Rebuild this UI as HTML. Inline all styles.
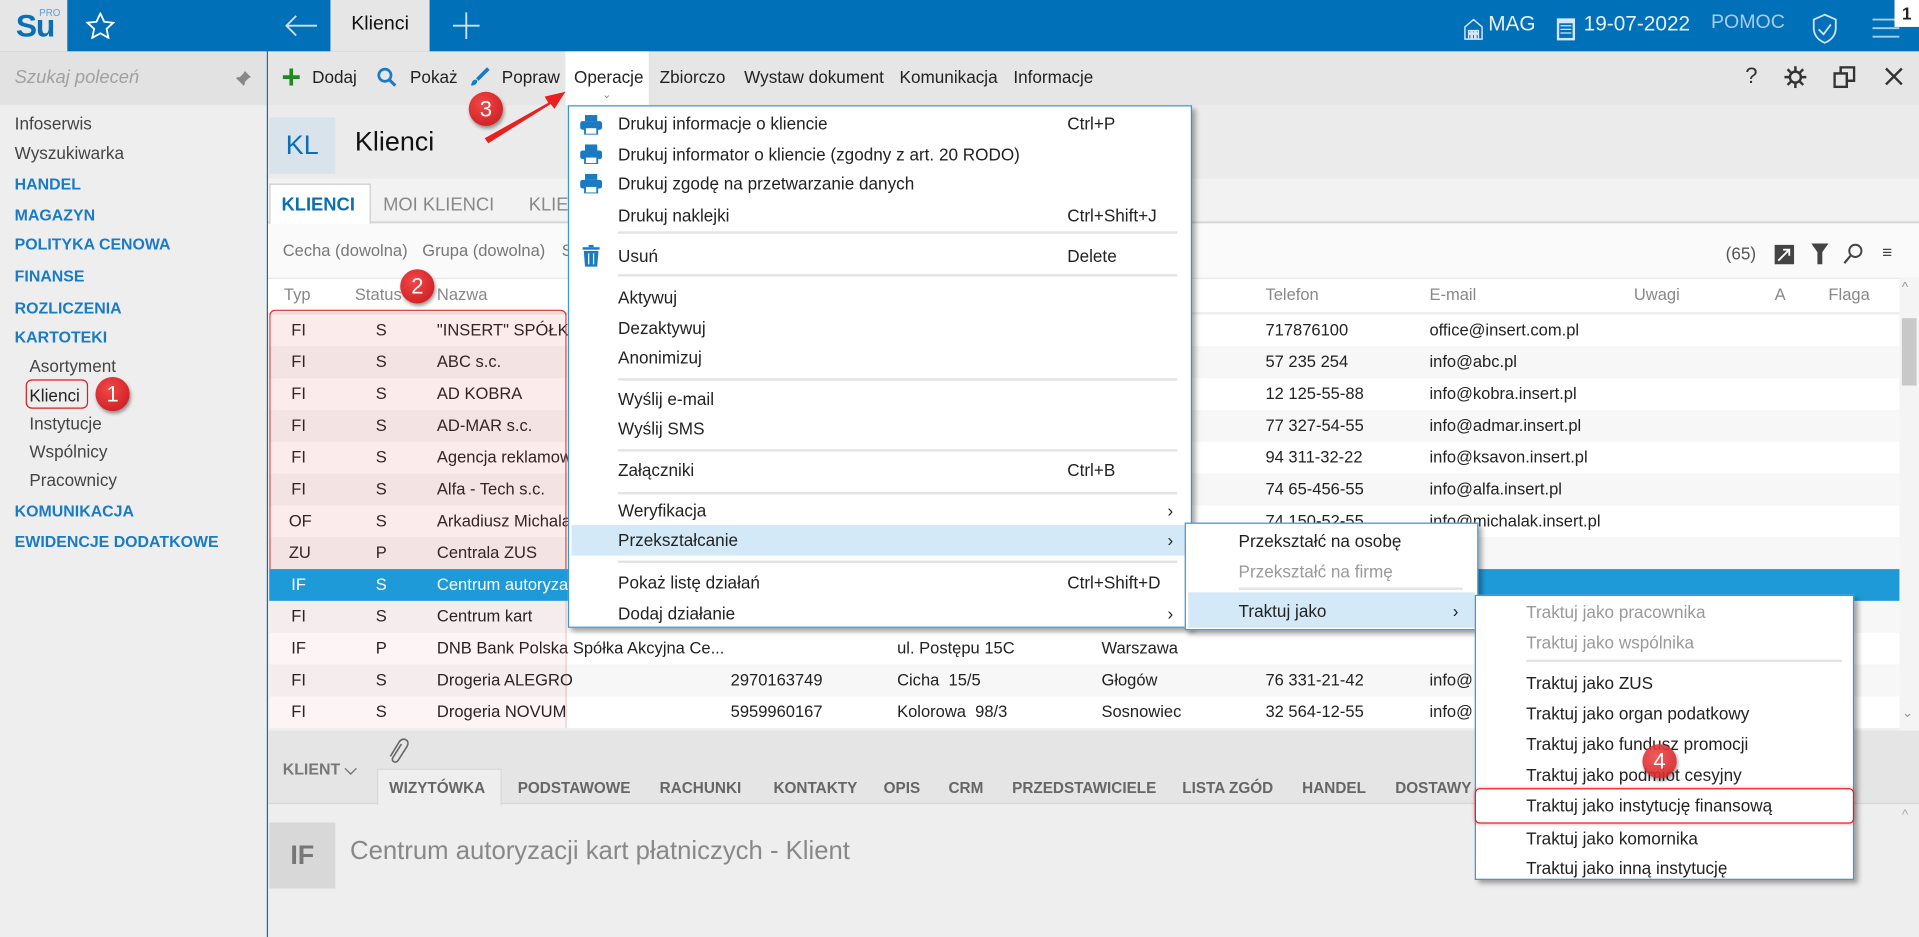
<!DOCTYPE html>
<html><head><meta charset="utf-8">
<style>
*{margin:0;padding:0;box-sizing:border-box}
html,body{width:1919px;height:937px;overflow:hidden;background:#eee}
#w{position:absolute;left:0;top:0;width:1568px;height:766px;transform:scale(1.22385);transform-origin:0 0;font-family:"Liberation Sans",sans-serif;font-size:13.5px;color:#222;background:#eee;overflow:hidden}
.a{position:absolute;white-space:nowrap}
.side .it{position:absolute;left:12px;font-size:14px;color:#444}
.side .b{color:#1a7bc4;font-weight:bold;font-size:13px}
.side .s{left:24px}
.tb span{position:absolute;top:55px;font-size:14px}
.row{position:absolute;left:220px;width:1332px;height:26px}
.row span{position:absolute;top:5px;font-size:13.5px}
.m{position:absolute;background:#fff;border:1px solid #3a96d8;box-shadow:3px 3px 4px rgba(0,0,0,.35)}
.m .t{position:absolute;font-size:14px;white-space:nowrap}
.sep{position:absolute;height:2px;background:#e4e4e4}
.hl{position:absolute;background:#d4e9f7}
.circ{position:absolute;width:28px;height:28px;border-radius:50%;background:radial-gradient(circle at 40% 35%,#f04848,#c8161b);color:#fff;font-size:18px;text-align:center;line-height:28px;box-shadow:1px 2px 3px rgba(0,0,0,.4)}
.bt{position:absolute;top:637px;font-size:12.5px;font-weight:bold;color:#666}
</style></head><body><div id="w">
<!-- top bar -->
<div class="a" style="left:0;top:0;width:1568px;height:42px;background:#0070b8"></div>
<div class="a" style="left:0;top:0;width:55px;height:42px;background:#e6e6e6"></div>
<div class="a" style="left:13px;top:6px;font-size:26px;font-weight:bold;color:#0a6fb5;letter-spacing:-1px">Su</div>
<div class="a" style="left:32px;top:6px;font-size:8px;color:#5aa0d8">PRO</div>
<svg class="a" style="left:70px;top:10px" width="24" height="22" viewBox="0 0 24 22"><path d="M12 1l3.2 6.8 7.3.8-5.4 5 1.5 7.3L12 17.2 5.4 20.9 6.9 13.6 1.5 8.6l7.3-.8z" fill="none" stroke="#fff" stroke-width="1.5"/></svg>
<svg class="a" style="left:232px;top:12px" width="28" height="18"><path d="M27 9H2M10 1L2 9l8 8" fill="none" stroke="#cfe2f3" stroke-width="1.5"/></svg>
<div class="a" style="left:270px;top:0;width:81px;height:42px;background:#e6e6e6"></div>
<div class="a" style="left:287px;top:11px;font-size:16px;color:#111">Klienci</div>
<svg class="a" style="left:370px;top:10px" width="22" height="22"><path d="M11 0v22M0 11h22" stroke="#cfe2f3" stroke-width="1.5"/></svg>
<svg class="a" style="left:1196px;top:15px" width="16" height="18"><path d="M1 17V7l7-6 7 6v10zM4 10h2v2H4zm3 0h2v2H7zm3 0h2v2h-2zM4 13h2v4H4zm3 0h2v4H7zm3 0h2v4h-2z" fill="none" stroke="#d6e6f4" stroke-width="1.2"/></svg>
<div class="a" style="left:1216px;top:10px;font-size:17px;color:#e8f0f8">MAG</div>
<svg class="a" style="left:1272px;top:14px" width="15" height="20"><rect x="0" y="1" width="15" height="18" fill="#d6e6f4"/><rect x="2" y="5" width="11" height="12" fill="#0070b8"/><path d="M3 7h9M3 10h9M3 13h9" stroke="#d6e6f4"/></svg>
<div class="a" style="left:1294px;top:10px;font-size:17px;color:#e8f0f8">19-07-2022</div>
<div class="a" style="left:1398px;top:10px;font-size:16px;color:#a8cdea">POMOC</div>
<svg class="a" style="left:1480px;top:11px" width="22" height="26"><path d="M11 1L2 5v7c0 6 4 10 9 12 5-2 9-6 9-12V5z M6 13l4 4 6-8" fill="none" stroke="#cfe2f3" stroke-width="1.5"/></svg>
<svg class="a" style="left:1530px;top:14px" width="22" height="18"><path d="M0 2h22M0 9h22M0 16h22" stroke="#a8cdea" stroke-width="1.5"/></svg>
<div class="a" style="left:1548px;top:0;width:20px;height:22px;background:#fff;font-weight:bold;font-size:14px;text-align:center;line-height:22px">1</div>
<!-- sidebar -->
<div class="side">
<div class="a" style="left:0;top:42px;width:218px;height:44px;background:#e2e2e2"></div>
<div class="a" style="left:12px;top:55px;font-size:15px;font-style:italic;color:#a0a0a0">Szukaj poleceń</div>
<svg class="a" style="left:192px;top:57px" width="14" height="14"><path d="M8 1l5 5-2 1-3 3 0 2-1 1-3-3-4 4 4-4-3-3 1-1h2l3-3z" fill="#888"/></svg>
<div class="it" style="top:93px">Infoserwis</div>
<div class="it" style="top:117px">Wyszukiwarka</div>
<div class="it b" style="top:143px">HANDEL</div>
<div class="it b" style="top:168px">MAGAZYN</div>
<div class="it b" style="top:192px">POLITYKA CENOWA</div>
<div class="it b" style="top:218px">FINANSE</div>
<div class="it b" style="top:244px">ROZLICZENIA</div>
<div class="it b" style="top:268px">KARTOTEKI</div>
<div class="it s" style="top:291px">Asortyment</div>
<div class="it s" style="top:315px;color:#222">Klienci</div>
<div class="it s" style="top:338px">Instytucje</div>
<div class="it s" style="top:361px">Wspólnicy</div>
<div class="it s" style="top:384px">Pracownicy</div>
<div class="it b" style="top:410px">KOMUNIKACJA</div>
<div class="it b" style="top:435px">EWIDENCJE DODATKOWE</div>
</div>
<div class="a" style="left:21px;top:310px;width:51px;height:24px;border:1.5px solid #d92020;border-radius:5px"></div>
<div class="a" style="left:218px;top:42px;width:1px;height:724px;background:#0a6fb5"></div>
<!-- toolbar -->
<div class="a" style="left:219px;top:42px;width:1349px;height:44px;background:#e6e6e6"></div>
<div class="a" style="left:462px;top:42px;width:68px;height:44px;background:#fff"></div>
<div class="tb">
<svg class="a" style="left:231px;top:56px" width="14" height="14"><path d="M7 0v14M0 7h14" stroke="#1f8b1f" stroke-width="3"/></svg>
<span style="left:255px">Dodaj</span>
<svg class="a" style="left:308px;top:55px" width="16" height="16"><circle cx="6.5" cy="6.5" r="5" fill="none" stroke="#1a7bc4" stroke-width="2.2"/><path d="M10 10l5 5" stroke="#1a7bc4" stroke-width="2.5"/></svg>
<span style="left:335px">Pokaż</span>
<svg class="a" style="left:384px;top:55px" width="16" height="16"><path d="M15 1L6 10" stroke="#1a7bc4" stroke-width="3"/><path d="M5 10c-3 0-4 3-4 5 2 0 5-1 5-4z" fill="#1a7bc4"/></svg>
<span style="left:410px">Popraw</span>
<span style="left:469px">Operacje</span>
<span style="left:539px">Zbiorczo</span>
<span style="left:608px">Wystaw dokument</span>
<span style="left:735px">Komunikacja</span>
<span style="left:828px">Informacje</span>
</div>
<div class="a" style="left:492px;top:72px;font-size:9px;color:#888">⌄</div>
<div class="a" style="left:1426px;top:52px;font-size:18px;color:#333">?</div>
<svg class="a" style="left:1458px;top:54px" width="18" height="18" viewBox="0 0 18 18"><circle cx="9" cy="9" r="4.5" fill="none" stroke="#333" stroke-width="2"/><path d="M9 0v4M9 14v4M0 9h4M14 9h4M2.6 2.6l2.8 2.8M12.6 12.6l2.8 2.8M2.6 15.4l2.8-2.8M12.6 5.4l2.8-2.8" stroke="#333" stroke-width="2"/></svg>
<svg class="a" style="left:1498px;top:54px" width="18" height="18"><rect x="1" y="6" width="10" height="11" fill="none" stroke="#333" stroke-width="2"/><path d="M6 6V1h11v11h-6" fill="none" stroke="#333" stroke-width="2"/></svg>
<svg class="a" style="left:1540px;top:55px" width="15" height="15"><path d="M1 1l13 13M14 1L1 14" stroke="#333" stroke-width="2"/></svg>
<!-- title -->
<div class="a" style="left:219px;top:86px;width:1349px;height:60px;background:#ebebeb"></div>
<div class="a" style="left:220px;top:96px;width:54px;height:46px;background:#d8e3ec;color:#0a6fb5;font-size:22px;text-align:center;line-height:46px">KL</div>
<div class="a" style="left:290px;top:103px;font-size:22px;color:#111">Klienci</div>
<!-- tabs -->
<div class="a" style="left:219px;top:146px;width:1349px;height:36px;background:#f2f2f2;border-bottom:1px solid #ccc"></div>
<div class="a" style="left:220px;top:150px;width:83px;height:33px;background:#fff;border:1px solid #ccc;border-bottom:none"></div>
<div class="a" style="left:230px;top:159px;font-size:15px;font-weight:bold;color:#0a6fb5">KLIENCI</div>
<div class="a" style="left:313px;top:159px;font-size:15px;color:#888">MOI KLIENCI</div>
<div class="a" style="left:432px;top:159px;font-size:15px;color:#888">KLIE</div>
<div class="a" style="left:219px;top:183px;width:1349px;height:44px;background:#fafafa"></div>
<div class="a" style="left:231px;top:197px;font-size:13.5px;color:#777">Cecha (dowolna)</div>
<div class="a" style="left:345px;top:197px;font-size:13.5px;color:#777">Grupa (dowolna)</div>
<div class="a" style="left:459px;top:197px;font-size:13.5px;color:#777">S</div>
<div class="a" style="left:1410px;top:199px;font-size:14px;color:#555">(65)</div>
<svg class="a" style="left:1450px;top:200px" width="16" height="16"><rect width="16" height="16" fill="#444"/><path d="M3 13l9-9M7 4h5v5" stroke="#fff" stroke-width="1.5" fill="none"/></svg>
<svg class="a" style="left:1480px;top:199px" width="14" height="17"><path d="M0 0h14L9 7v10H5V7z" fill="#444"/></svg>
<svg class="a" style="left:1506px;top:199px" width="16" height="17"><circle cx="10" cy="6" r="5" fill="none" stroke="#444" stroke-width="1.6"/><path d="M6 10l-5 6" stroke="#444" stroke-width="1.8"/></svg>
<div class="a" style="left:1538px;top:198px;font-size:14px;color:#444">≡</div>
<!-- header -->
<div class="a" style="left:219px;top:227px;width:1349px;height:28px;background:#fff;border-top:1px solid #e8e8e8"></div>
<div class="a" style="left:232px;top:233px;color:#888;font-size:13.5px">Typ</div>
<div class="a" style="left:290px;top:233px;color:#888;font-size:13.5px">Status</div>
<div class="a" style="left:357px;top:233px;color:#888;font-size:13.5px">Nazwa</div>
<div class="a" style="left:1034px;top:233px;color:#888;font-size:13.5px">Telefon</div>
<div class="a" style="left:1168px;top:233px;color:#888;font-size:13.5px">E-mail</div>
<div class="a" style="left:1335px;top:233px;color:#888;font-size:13.5px">Uwagi</div>
<div class="a" style="left:1450px;top:233px;color:#888;font-size:13.5px">A</div>
<div class="a" style="left:1494px;top:233px;color:#888;font-size:13.5px">Flaga</div>
<div class="a" style="left:1552px;top:227px;width:16px;height:370px;background:#f4f4f4"></div>
<div class="a" style="left:1554px;top:260px;width:12px;height:55px;background:#c8c8c8"></div>
<div class="a" style="left:1554px;top:229px;font-size:11px;color:#999">^</div>
<div class="a" style="left:1554px;top:576px;font-size:11px;color:#999">⌄</div>
<!-- rows -->
<div class="row" style="top:257px;background:#fff"><span style="left:18px">FI</span><span style="left:87px">S</span><span style="left:137px">"INSERT" SPÓŁKA</span><span style="left:814px">717876100</span><span style="left:948px">office@insert.com.pl</span></div>
<div class="row" style="top:283px;background:#f7f7f7"><span style="left:18px">FI</span><span style="left:87px">S</span><span style="left:137px">ABC s.c.</span><span style="left:814px">57 235 254</span><span style="left:948px">info@abc.pl</span></div>
<div class="row" style="top:309px;background:#fff"><span style="left:18px">FI</span><span style="left:87px">S</span><span style="left:137px">AD KOBRA</span><span style="left:814px">12 125-55-88</span><span style="left:948px">info@kobra.insert.pl</span></div>
<div class="row" style="top:335px;background:#f7f7f7"><span style="left:18px">FI</span><span style="left:87px">S</span><span style="left:137px">AD-MAR s.c.</span><span style="left:814px">77 327-54-55</span><span style="left:948px">info@admar.insert.pl</span></div>
<div class="row" style="top:361px;background:#fff"><span style="left:18px">FI</span><span style="left:87px">S</span><span style="left:137px">Agencja reklamow</span><span style="left:814px">94 311-32-22</span><span style="left:948px">info@ksavon.insert.pl</span></div>
<div class="row" style="top:387px;background:#f7f7f7"><span style="left:18px">FI</span><span style="left:87px">S</span><span style="left:137px">Alfa - Tech s.c.</span><span style="left:814px">74 65-456-55</span><span style="left:948px">info@alfa.insert.pl</span></div>
<div class="row" style="top:413px;background:#fff"><span style="left:16px">OF</span><span style="left:87px">S</span><span style="left:137px">Arkadiusz Michala</span><span style="left:814px">74 150-52-55</span><span style="left:948px">info@michalak.insert.pl</span></div>
<div class="row" style="top:439px;background:#f7f7f7"><span style="left:16px">ZU</span><span style="left:87px">P</span><span style="left:137px">Centrala ZUS</span></div>
<div class="row" style="top:465px;background:#1e9ad9;color:#fff"><span style="left:18px">IF</span><span style="left:87px">S</span><span style="left:137px">Centrum autoryza</span></div>
<div class="row" style="top:491px;background:#f7f7f7"><span style="left:18px">FI</span><span style="left:87px">S</span><span style="left:137px">Centrum kart</span></div>
<div class="row" style="top:517px;background:#fff"><span style="left:18px">IF</span><span style="left:87px">P</span><span style="left:137px">DNB Bank Polska Spółka Akcyjna Ce...</span><span style="left:513px">ul. Postępu 15C</span><span style="left:680px">Warszawa</span></div>
<div class="row" style="top:543px;background:#f7f7f7"><span style="left:18px">FI</span><span style="left:87px">S</span><span style="left:137px">Drogeria ALEGRO</span><span style="left:377px">2970163749</span><span style="left:513px">Cicha&nbsp; 15/5</span><span style="left:680px">Głogów</span><span style="left:814px">76 331-21-42</span><span style="left:948px">info@</span></div>
<div class="row" style="top:569px;background:#fff"><span style="left:18px">FI</span><span style="left:87px">S</span><span style="left:137px">Drogeria NOVUM</span><span style="left:377px">5959960167</span><span style="left:513px">Kolorowa&nbsp; 98/3</span><span style="left:680px">Sosnowiec</span><span style="left:814px">32 564-12-55</span><span style="left:948px">info@</span></div>
<div class="a" style="left:220px;top:253px;width:243px;height:212px;background:rgba(220,60,60,.10);border:1.5px solid #e03030;border-bottom:none;border-radius:5px 5px 0 0"></div>
<div class="a" style="left:220px;top:491px;width:243px;height:104px;background:rgba(220,60,60,.05);border-right:1px solid rgba(220,60,60,.25)"></div>
<!-- bottom -->
<div class="a" style="left:219px;top:597px;width:1349px;height:60px;background:#e5e5e5;border-bottom:1px solid #d6d6d6"></div>
<div class="a" style="left:231px;top:621px;font-size:13px;font-weight:bold;color:#777">KLIENT ⌵</div>
<svg class="a" style="left:316px;top:603px" width="18" height="22" viewBox="0 0 18 22"><path d="M12 5l-7 11c-1 2 0 3 1 3.5s2.5 0 3.5-1.5l7-11c1.5-2.5 1-4.5-.8-5.5S11.5 1 10 3.5L3 15" fill="none" stroke="#666" stroke-width="1.3"/></svg>
<div class="a" style="left:308px;top:628px;width:102px;height:30px;background:#eeeeee;border:1px solid #d8d8d8;border-bottom:none"></div>
<div class="bt" style="left:318px">WIZYTÓWKA</div>
<div class="bt" style="left:423px">PODSTAWOWE</div>
<div class="bt" style="left:539px">RACHUNKI</div>
<div class="bt" style="left:632px">KONTAKTY</div>
<div class="bt" style="left:722px">OPIS</div>
<div class="bt" style="left:775px">CRM</div>
<div class="bt" style="left:827px">PRZEDSTAWICIELE</div>
<div class="bt" style="left:966px">LISTA ZGÓD</div>
<div class="bt" style="left:1064px">HANDEL</div>
<div class="bt" style="left:1140px">DOSTAWY</div>
<div class="a" style="left:1554px;top:660px;font-size:11px;color:#aaa">^</div>
<div class="a" style="left:220px;top:672px;width:54px;height:54px;background:#d8d8d8;color:#777;font-size:22px;font-weight:bold;text-align:center;line-height:54px">IF</div>
<div class="a" style="left:286px;top:684px;font-size:21px;color:#888">Centrum autoryzacji kart płatniczych - Klient</div>
<!-- menu1 -->
<div class="m" style="left:464px;top:86px;width:510px;height:427px">
<svg class="a" style="left:9px;top:7px" width="18" height="16"><rect x="4" y="0" width="10" height="5" fill="#1a7bc4"/><rect x="0" y="5" width="18" height="7" rx="2" fill="#1a7bc4"/><rect x="4" y="10" width="10" height="6" fill="#fff" stroke="#1a7bc4" stroke-width="1.5"/></svg>
<svg class="a" style="left:9px;top:31px" width="18" height="16"><rect x="4" y="0" width="10" height="5" fill="#1a7bc4"/><rect x="0" y="5" width="18" height="7" rx="2" fill="#1a7bc4"/><rect x="4" y="10" width="10" height="6" fill="#fff" stroke="#1a7bc4" stroke-width="1.5"/></svg>
<svg class="a" style="left:9px;top:55px" width="18" height="16"><rect x="4" y="0" width="10" height="5" fill="#1a7bc4"/><rect x="0" y="5" width="18" height="7" rx="2" fill="#1a7bc4"/><rect x="4" y="10" width="10" height="6" fill="#fff" stroke="#1a7bc4" stroke-width="1.5"/></svg>
<svg class="a" style="left:11px;top:113px" width="14" height="18"><rect x="0" y="2" width="14" height="2" fill="#1a7bc4"/><rect x="5" y="0" width="4" height="2" fill="#1a7bc4"/><path d="M1 5h12l-1 13H2z" fill="#1a7bc4"/><path d="M5 7v9M9 7v9" stroke="#fff"/></svg>
<div class="t" style="left:40px;top:6px">Drukuj informacje o kliencie</div><div class="t" style="left:407px;top:6px">Ctrl+P</div>
<div class="t" style="left:40px;top:31px">Drukuj informator o kliencie (zgodny z art. 20 RODO)</div>
<div class="t" style="left:40px;top:55px">Drukuj zgodę na przetwarzanie danych</div>
<div class="t" style="left:40px;top:81px">Drukuj naklejki</div><div class="t" style="left:407px;top:81px">Ctrl+Shift+J</div>
<div class="sep" style="left:40px;top:102px;width:457px"></div>
<div class="t" style="left:40px;top:114px">Usuń</div><div class="t" style="left:407px;top:114px">Delete</div>
<div class="sep" style="left:40px;top:137px;width:457px"></div>
<div class="t" style="left:40px;top:148px">Aktywuj</div>
<div class="t" style="left:40px;top:173px">Dezaktywuj</div>
<div class="t" style="left:40px;top:197px">Anonimizuj</div>
<div class="sep" style="left:40px;top:222px;width:457px"></div>
<div class="t" style="left:40px;top:231px">Wyślij e-mail</div>
<div class="t" style="left:40px;top:255px">Wyślij SMS</div>
<div class="sep" style="left:40px;top:280px;width:457px"></div>
<div class="t" style="left:40px;top:289px">Załączniki</div><div class="t" style="left:407px;top:289px">Ctrl+B</div>
<div class="sep" style="left:40px;top:315px;width:457px"></div>
<div class="t" style="left:40px;top:322px">Weryfikacja</div><div class="t" style="left:489px;top:322px">›</div>
<div class="hl" style="left:2px;top:342px;width:504px;height:25px"></div>
<div class="t" style="left:40px;top:346px">Przekształcanie</div><div class="t" style="left:489px;top:346px">›</div>
<div class="sep" style="left:40px;top:371px;width:457px"></div>
<div class="t" style="left:40px;top:381px">Pokaż listę działań</div><div class="t" style="left:407px;top:381px">Ctrl+Shift+D</div>
<div class="t" style="left:40px;top:406px">Dodaj działanie</div><div class="t" style="left:489px;top:406px">›</div>
</div>
<!-- menu2 -->
<div class="m" style="left:968px;top:427px;width:240px;height:88px">
<div class="t" style="left:43px;top:6px">Przekształć na osobę</div>
<div class="t" style="left:43px;top:31px;color:#999">Przekształć na firmę</div>
<div class="sep" style="left:43px;top:52px;width:183px"></div>
<div class="hl" style="left:2px;top:56px;width:234px;height:29px"></div>
<div class="t" style="left:43px;top:63px">Traktuj jako</div><div class="t" style="left:218px;top:63px">›</div>
</div>
<!-- menu3 -->
<div class="m" style="left:1205px;top:486px;width:310px;height:233px">
<div class="t" style="left:41px;top:5px;color:#999">Traktuj jako pracownika</div>
<div class="t" style="left:41px;top:30px;color:#999">Traktuj jako wspólnika</div>
<div class="sep" style="left:41px;top:52px;width:258px"></div>
<div class="t" style="left:41px;top:63px">Traktuj jako ZUS</div>
<div class="t" style="left:41px;top:88px">Traktuj jako organ podatkowy</div>
<div class="t" style="left:41px;top:113px">Traktuj jako fundusz promocji</div>
<div class="t" style="left:41px;top:138px">Traktuj jako podmiot cesyjny</div>
<div class="t" style="left:41px;top:163px">Traktuj jako instytucję finansową</div>
<div class="t" style="left:41px;top:190px">Traktuj jako komornika</div>
<div class="t" style="left:41px;top:214px">Traktuj jako inną instytucję</div>
</div>
<div class="a" style="left:1205px;top:644px;width:310px;height:29px;border:1.5px solid #e02020;border-radius:4px;box-shadow:0 0 3px rgba(224,32,32,.4)"></div>
<!-- annotations -->
<svg class="a" style="left:390px;top:70px" width="80" height="50"><path d="M6 43L58 14l-3-5 17-4-9 14-3-4L9 47z" fill="#e82020"/></svg>
<div class="circ" style="left:78px;top:308px">1</div>
<div class="circ" style="left:327px;top:220px">2</div>
<div class="circ" style="left:383px;top:75px">3</div>
<div class="circ" style="left:1342px;top:608px;background:radial-gradient(circle at 40% 35%,rgba(240,72,72,.9),rgba(200,22,27,.9))">4</div>
</div></body></html>
